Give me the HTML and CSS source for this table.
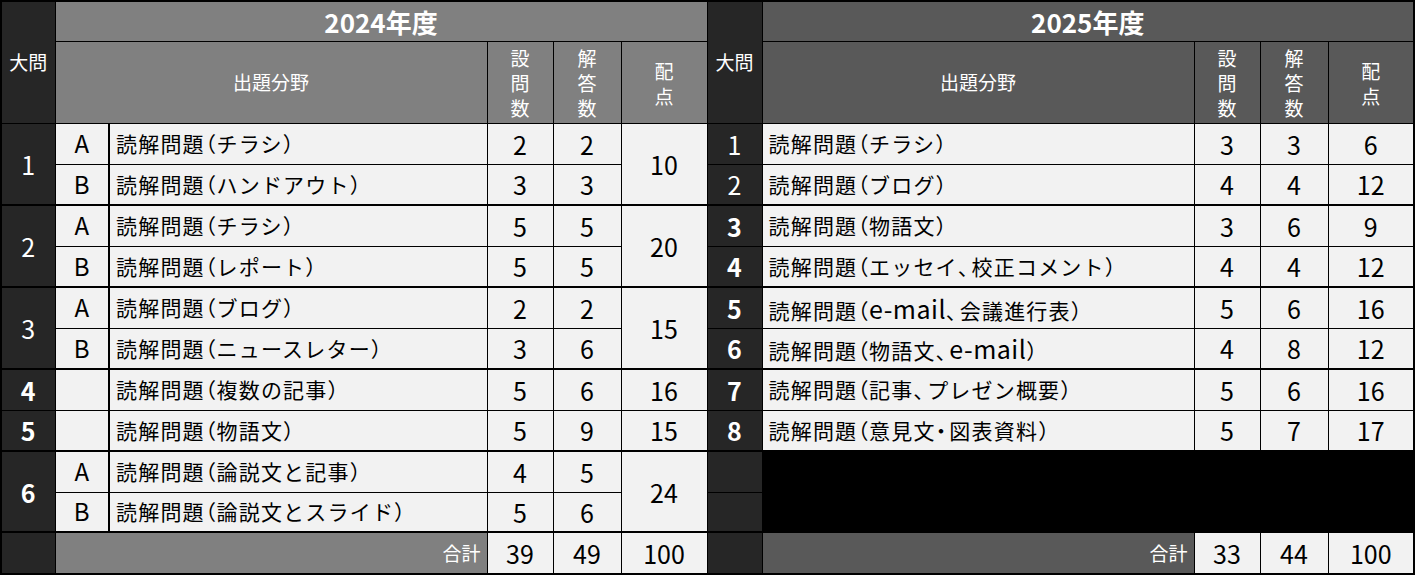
FILE: index.html
```html
<!DOCTYPE html>
<html lang="ja">
<head>
<meta charset="utf-8">
<title>出題分野</title>
<link rel="stylesheet" href="styles.css">
</head>
<body>
<div class="sheet">
<table class="grid">
<colgroup>
<col class="w-no"><col class="w-sub"><col class="w-txt"><col class="w-q"><col class="w-a"><col class="w-p">
<col class="w-no2"><col class="w-txt2"><col class="w-q"><col class="w-a"><col class="w-p2">
</colgroup>
<tr class="h1">
  <th rowspan="2" class="no-h">大問</th>
  <th colspan="5" class="year g24">2024年度</th>
  <th rowspan="2" class="no-h">大問</th>
  <th colspan="4" class="year g25">2025年度</th>
</tr>
<tr class="h2">
  <th colspan="2" class="hd g24">出題分野</th>
  <th class="hd g24 v">設<br>問<br>数</th>
  <th class="hd g24 v">解<br>答<br>数</th>
  <th class="hd g24 v">配<br>点</th>
  <th class="hd g25">出題分野</th>
  <th class="hd g25 v">設<br>問<br>数</th>
  <th class="hd g25 v">解<br>答<br>数</th>
  <th class="hd g25 v">配<br>点</th>
</tr>
<tr class="r thin">
  <td rowspan="2" class="no">1</td><td class="sub">A</td><td class="txt">読解問題<span class="op">（</span>チラシ）</td><td class="num">2</td><td class="num">2</td><td rowspan="2" class="num">10</td>
  <td class="no">1</td><td class="txt">読解問題<span class="op">（</span>チラシ）</td><td class="num">3</td><td class="num">3</td><td class="num">6</td>
</tr>
<tr class="r">
  <td class="sub">B</td><td class="txt">読解問題<span class="op">（</span>ハンドアウト）</td><td class="num">3</td><td class="num">3</td>
  <td class="no">2</td><td class="txt">読解問題<span class="op">（</span>ブログ）</td><td class="num">4</td><td class="num">4</td><td class="num">12</td>
</tr>
<tr class="r grp">
  <td rowspan="2" class="no">2</td><td class="sub">A</td><td class="txt">読解問題<span class="op">（</span>チラシ）</td><td class="num">5</td><td class="num">5</td><td rowspan="2" class="num">20</td>
  <td class="no b">3</td><td class="txt">読解問題<span class="op">（</span>物語文）</td><td class="num">3</td><td class="num">6</td><td class="num">9</td>
</tr>
<tr class="r">
  <td class="sub">B</td><td class="txt">読解問題<span class="op">（</span>レポート）</td><td class="num">5</td><td class="num">5</td>
  <td class="no b">4</td><td class="txt">読解問題<span class="op">（</span>エッセイ<span class="nar">、</span>校正コメント）</td><td class="num">4</td><td class="num">4</td><td class="num">12</td>
</tr>
<tr class="r grp">
  <td rowspan="2" class="no">3</td><td class="sub">A</td><td class="txt">読解問題<span class="op">（</span>ブログ）</td><td class="num">2</td><td class="num">2</td><td rowspan="2" class="num">15</td>
  <td class="no b">5</td><td class="txt">読解問題<span class="op">（</span><span class="lat">e-mail</span><span class="nar">、</span>会議進行表）</td><td class="num">5</td><td class="num">6</td><td class="num">16</td>
</tr>
<tr class="r">
  <td class="sub">B</td><td class="txt">読解問題<span class="op">（</span>ニュースレター）</td><td class="num">3</td><td class="num">6</td>
  <td class="no b">6</td><td class="txt">読解問題<span class="op">（</span>物語文<span class="nar">、</span><span class="lat">e-mail</span>）</td><td class="num">4</td><td class="num">8</td><td class="num">12</td>
</tr>
<tr class="r grp">
  <td class="no b">4</td><td class="sub"></td><td class="txt">読解問題<span class="op">（</span>複数の記事）</td><td class="num">5</td><td class="num">6</td><td class="num">16</td>
  <td class="no b">7</td><td class="txt">読解問題<span class="op">（</span>記事<span class="nar">、</span>プレゼン概要）</td><td class="num">5</td><td class="num">6</td><td class="num">16</td>
</tr>
<tr class="r">
  <td class="no b">5</td><td class="sub"></td><td class="txt">読解問題<span class="op">（</span>物語文）</td><td class="num">5</td><td class="num">9</td><td class="num">15</td>
  <td class="no b">8</td><td class="txt">読解問題<span class="op">（</span>意見文<span class="nar">・</span>図表資料）</td><td class="num">5</td><td class="num">7</td><td class="num">17</td>
</tr>
<tr class="r grp">
  <td rowspan="2" class="no b">6</td><td class="sub">A</td><td class="txt">読解問題<span class="op">（</span>論説文と記事）</td><td class="num">4</td><td class="num">5</td><td rowspan="2" class="num">24</td>
  <td class="no"></td><td colspan="4" rowspan="2" class="blank"></td>
</tr>
<tr class="r r40">
  <td class="sub">B</td><td class="txt">読解問題<span class="op">（</span>論説文とスライド）</td><td class="num">5</td><td class="num">6</td>
  <td class="no"></td>
</tr>
<tr class="r grp">
  <td class="no"></td><td colspan="2" class="sum g24">合計</td><td class="num">39</td><td class="num">49</td><td class="num">100</td>
  <td class="no"></td><td class="sum g25">合計</td><td class="num">33</td><td class="num">44</td><td class="num">100</td>
</tr>
</table>
</div>
</body>
</html>
```

FILE: styles.css
```css
* { box-sizing: border-box; }

html, body {
  margin: 0;
  background: #000;
}

body {
  font-family: "Noto Sans CJK JP", "Noto Sans", sans-serif;
}

.sheet {
  width: 1415px;
  height: 575px;
  border: 2px solid #000;
  background: #000;
  overflow: hidden;
}

.grid {
  width: 1411px;
  table-layout: fixed;
  border-collapse: collapse;
  border-style: hidden;
}

.w-no { width: 53px; }
.w-sub { width: 54px; }
.w-txt { width: 378px; }
.w-q { width: 66px; }
.w-a { width: 68px; }
.w-p { width: 86px; }
.w-no2 { width: 55px; }
.w-txt2 { width: 432px; }
.w-p2 { width: 85px; }

.grid th,
.grid td {
  border: 1px solid #000;
  padding: 0;
  text-align: center;
  vertical-align: middle;
  font-weight: normal;
  white-space: nowrap;
  overflow: hidden;
  line-height: 1.2;
}

.h1 { height: 39px; }
.h2 { height: 82px; }
.r { height: 41px; }
.r40 { height: 40px; }

.grp > td { border-top-width: 2px; }

.g24 { background: #808080; color: #fff; }
.g25 { background: #595959; color: #fff; }

.no-h {
  background: #262626;
  color: #fff;
  font-size: 19px;
  padding-bottom: 2px;
}

.year {
  font-size: 26px;
  font-weight: bold !important;
}

.hd { font-size: 19px; }
.hd.v { line-height: 25px; padding-top: 1px; }

.no {
  background: #262626;
  color: #fff;
  font-size: 25px;
}
.no.b { font-weight: bold; }

.sub,
.txt,
.num {
  background: #f2f2f2;
  color: #000;
}

.sub { font-size: 24px; border-right-width: 2px !important; }

.txt {
  text-align: left !important;
  font-size: 21px;
  letter-spacing: 1.2px;
  padding-left: 6px !important;
}

.txt .op { font-feature-settings: "palt"; }
.txt .lat { font-size: 25px; letter-spacing: 0.5px; }
.txt .nar { font-feature-settings: "palt"; margin-right: 2px; }

.num { font-size: 25px; }

.blank { background: #000; }

.sum {
  text-align: right !important;
  font-size: 19px;
  padding-right: 6px !important;
}
```
